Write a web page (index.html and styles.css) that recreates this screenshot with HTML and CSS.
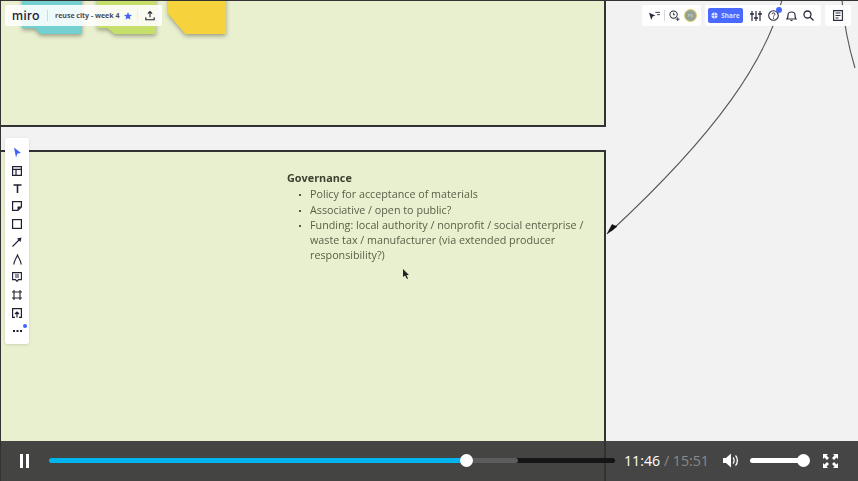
FILE: index.html
```html
<!DOCTYPE html>
<html>
<head lang="en">
    <meta charset="UTF-8">
    <title>reuse city - week 4</title>
    <link rel="stylesheet" href="styles.css">
</head>
<body>
    <div class="stage">
        <!-- board -->
        <div class="frame frame-top"></div>
        <div class="frame frame-main">
            <div class="note">
                <h3>Governance</h3>
                <ul>
                    <li>Policy for acceptance of materials</li>
                    <li>Associative / open to public?</li>
                    <li>Funding: local authority / nonprofit / social enterprise / waste tax / manufacturer (via extended producer responsibility?)</li>
                </ul>
            </div>
        </div>
        <div class="sticky sticky-teal"><div></div></div>
        <div class="sticky sticky-lime"><div></div></div>
        <div class="sticky sticky-yellow"><div></div></div>

        <svg class="arrows" width="858" height="481" viewBox="0 0 858 481">
            <path d="M782 0C765 60 720 130 611 231" fill="none" stroke="#555" stroke-width="1.100"/>
            <path d="M607 234L617 226.500L612 224.500Z" fill="#111" stroke="#111" stroke-width=".5"/>
            <path d="M842 0C844 25 849 48 855 68" fill="none" stroke="#555" stroke-width="1.100"/>
        </svg>

        <svg class="cursor" width="8" height="11" viewBox="0 0 8 11">
            <path d="M1 0L1 8L3 6.500L5 10L6 9.500L4.500 6L7 6Z" fill="#222"/>
        </svg>

        <!-- miro top left -->
        <div class="topbar topbar-left">
            <span class="logo">miro</span>
            <span class="sep"></span>
            <span class="board-name">reuse city - week 4</span>
            <svg class="star" width="8" height="8" viewBox="0 0 10 10"><path d="M5 0L6.400 3.300L10 3.700L7.200 6L8.100 9.500L5 7.700L1.900 9.500L2.800 6L0 3.700L3.600 3.300Z" fill="#4262ff"/></svg>
            <span class="sep sep-faint"></span>
            <svg width="10" height="11" viewBox="0 0 12 12"><path d="M6 8V1.500M3.500 3.800L6 1.300L8.500 3.800M1 8V11H11V8" fill="none" stroke="#1f2133" stroke-width="1.300"/></svg>
        </div>

        <!-- miro top right -->
        <div class="topbar-right">
            <div class="tb-group tb-collab">
                <svg width="12" height="10" viewBox="0 0 13 11"><path d="M1 2L8 5L5 6L3.500 10Z" fill="#1f2133"/><path d="M8 1.500H13M10 4H13" stroke="#1f2133"/></svg>
                <span class="sep"></span>
                <svg width="11" height="11" viewBox="0 0 12 12"><circle cx="5" cy="5" r="4" fill="none" stroke="#1f2133" stroke-width="1.100"/><path d="M5 3V5.500L6.500 5M9.500 8V12M7.500 10H11.500" fill="none" stroke="#1f2133"/></svg>
                <span class="avatar">FS</span>
            </div>
            <div class="tb-group tb-tools">
                <span class="share">
                    <svg width="7" height="7" viewBox="0 0 8 8"><circle cx="4" cy="4" r="3.500" fill="#dde3ff"/><path d="M0 4H8M4 0.500V7.500" stroke="#4262ff" stroke-width=".6"/></svg>
                    Share
                </span>
                <svg class="tool" width="12" height="12" viewBox="0 0 12 12"><path d="M2 1V11M6 1V11M10 1V11" stroke="#1f2133" stroke-width="1.200"/><path d="M0 4H4M4 8H8M8 4H12" stroke="#1f2133" stroke-width="1.500"/></svg>
                <span class="help">
                    <svg width="11" height="11" viewBox="0 0 11 11"><circle cx="5.500" cy="5.500" r="4.800" fill="none" stroke="#1f2133" stroke-width="1.100"/><path d="M4 4.200C4 2.500 7 2.500 7 4.200C7 5.200 5.500 5.300 5.500 6.500M5.500 7.500V8.800" fill="none" stroke="#1f2133"/></svg>
                    <span class="badge"></span>
                </span>
                <svg class="tool" width="11" height="12" viewBox="0 0 11 12"><path d="M1 9C2 8 2 7 2 5C2 1 9 1 9 5C9 7 9 8 10 9ZM4.500 10.500H6.500" fill="none" stroke="#1f2133" stroke-width="1.200"/></svg>
                <svg class="tool" width="11" height="11" viewBox="0 0 11 11"><circle cx="4.500" cy="4.500" r="3.500" fill="none" stroke="#1f2133" stroke-width="1.300"/><path d="M7 7L10.500 10.500" stroke="#1f2133" stroke-width="1.300"/></svg>
            </div>
            <div class="tb-group tb-notes">
                <svg width="10" height="11" viewBox="0 0 10 11"><path d="M.6.6H9.400V10.400H.6ZM2.500 3H7.500M2.500 5.500H7.500M2.500 8H5.500" fill="none" stroke="#1f2133" stroke-width="1.100"/></svg>
            </div>
        </div>

        <!-- left tools -->
        <div class="toolbar">
            <svg width="10" height="11" viewBox="0 0 10 11"><path d="M2 0.500L9 6L5.500 6.500L4 10.500Z" fill="#4262ff"/></svg>
            <svg width="10" height="10" viewBox="0 0 10 10"><path d="M.6.6H9.400V9.400H.6ZM.6 3.300H9.400M4 3.300V9.400" fill="none" stroke="#1f2133" stroke-width="1.200"/></svg>
            <svg width="9" height="9" viewBox="0 0 9 9"><path d="M.5 1H8.500M4.500 1V9" fill="none" stroke="#1f2133" stroke-width="1.600"/></svg>
            <svg width="10" height="10" viewBox="0 0 10 10"><path d="M.6.6H9.400V6L6 9.400H.6Z" fill="none" stroke="#1f2133" stroke-width="1.200"/><path d="M5.500 9.500V5.500H9.500Z" fill="#1f2133"/></svg>
            <svg width="10" height="10" viewBox="0 0 10 10"><rect x=".6" y=".6" width="8.800" height="8.800" fill="none" stroke="#1f2133" stroke-width="1.200"/></svg>
            <svg width="10" height="10" viewBox="0 0 10 10"><path d="M.5 9.500L7 3" stroke="#1f2133" stroke-width="1.100"/><path d="M9.500 .5L8.500 5L5 1.500Z" fill="#1f2133"/></svg>
            <svg width="9" height="11" viewBox="0 0 9 11"><path d="M.8 10.500C1 7 3 5 4.500 1C6 5 8 7 8.200 10.500" fill="none" stroke="#1f2133" stroke-width="1.100"/></svg>
            <svg width="10" height="10" viewBox="0 0 10 10"><path d="M.6.6H9.400V7.600H6.500L5 9.400L3.500 7.600H.6ZM3 3H7M3 5H7" fill="none" stroke="#1f2133" stroke-width="1.100"/></svg>
            <svg width="10" height="10" viewBox="0 0 10 10"><path d="M2 0V10M8 0V10M0 2H10M0 8H10" fill="none" stroke="#1f2133" stroke-width="1.100"/></svg>
            <svg width="10" height="10" viewBox="0 0 10 10"><path d="M3 9.400H.6V.6H9.400V9.400H7M5 9.500V4M3 6L5 4L7 6" fill="none" stroke="#1f2133" stroke-width="1.200"/></svg>
            <span class="more">
                <svg width="9" height="2" viewBox="0 0 9 2"><path d="M0 0H2V2H0ZM3.500 0H5.500V2H3.500ZM7 0H9V2H7Z" fill="#1f2133"/></svg>
                <span class="more-dot"></span>
            </span>
        </div>

        <!-- video player -->
        <div class="player">
            <button class="pause"><span></span><span></span></button>
            <div class="progress">
                <div class="buffered"></div>
                <div class="played"></div>
                <div class="knob knob-play"></div>
            </div>
            <div class="time">11:46 <span class="slash">/</span> <span class="total">15:51</span></div>
            <svg class="speaker" width="17" height="15" viewBox="0 0 17 15"><path d="M0 5H3L8 .5V14.500L3 10H0Z" fill="#fff"/><path d="M10 4.500C11.500 6 11.500 9 10 10.500M12.500 2.500C15 5 15 10 12.500 12.500" fill="none" stroke="#fff" stroke-width="1.300"/></svg>
            <div class="volume"><div class="knob knob-vol"></div></div>
            <svg class="fullscreen" width="15" height="14" viewBox="0 0 15 14"><path d="M0 0H5L3.500 1.500L6 4L4 6L1.500 3.500L0 5ZM15 0V5L13.500 3.500L11 6L9 4L11.500 1.500L10 0ZM0 14V9L1.500 10.500L4 8L6 10L3.500 12.500L5 14ZM15 14H10L11.500 12.500L9 10L11 8L13.500 10.500L15 9Z" fill="#fff"/></svg>
        </div>
    </div>
</body>
</html>
```

FILE: styles.css
```css
* {
    margin: 0;
    padding: 0;
    box-sizing: border-box;
}
html, body {
    width: 858px;
    height: 481px;
    overflow: hidden;
}
ul {
    list-style: none;
}
.stage {
    position: relative;
    width: 858px;
    height: 481px;
    overflow: hidden;
    background-color: #f2f2f2;
    border-top: 1px solid #333;
    font-family: "Open Sans", "Liberation Sans", sans-serif;
}
/* dark edge of the video */
.stage::after {
    content: "";
    position: absolute;
    top: 0;
    left: 0;
    width: 1px;
    height: 100%;
    background-color: #333;
}

/* board frames */
.frame {
    position: absolute;
    left: 1px;
    width: 605px;
    background-color: #e9f0cf;
    border: 2px solid #333;
    border-left: 0;
}
.frame-top {
    top: -4px;
    height: 130px;
}
.frame-main {
    top: 149px;
    height: 340px;
    padding: 18px 0 0 286px;
}
.note {
    width: 300px;
    color: #5a6049;
    font-size: 10.750px;
    line-height: 15.300px;
    filter: blur(.3px);
}
.note h3 {
    font-size: 10.850px;
    font-weight: 700;
    line-height: 15.300px;
    margin-bottom: 2px;
    color: #3c4230;
}
.note ul {
    padding-left: 23px;
}
.note li {
    position: relative;
}
.note li::before {
    content: "";
    position: absolute;
    left: -11px;
    top: 7px;
    width: 2px;
    height: 2px;
    background-color: #555;
}

/* stickies */
.sticky {
    position: absolute;
    top: -6px;
    filter: drop-shadow(0 2px 2px rgba(60, 60, 40, .45));
}
.sticky div {
    height: 39px;
}
.sticky-teal {
    left: 22px;
}
.sticky-teal div {
    width: 60px;
    background-color: #74cfd0;
    clip-path: polygon(0 0, 100% 0, 100% 100%, 30% 100%, 22% 85%, 0 85%);
}
.sticky-lime {
    left: 97px;
}
.sticky-lime div {
    width: 59px;
    background-color: #c6de6a;
    clip-path: polygon(0 0, 100% 0, 100% 100%, 30% 100%, 18% 85%, 0 85%);
}
.sticky-yellow {
    left: 168px;
}
.sticky-yellow div {
    width: 58px;
    background-color: #f6d23c;
    clip-path: polygon(0 0, 100% 0, 100% 100%, 30% 100%, 0 48%);
}

.arrows {
    position: absolute;
    top: -1px;
    left: 0;
}
.cursor {
    position: absolute;
    top: 268px;
    left: 402px;
}

/* top bars */
.topbar {
    position: absolute;
    top: 4px;
    left: 5px;
    height: 21px;
    width: 157px;
    display: flex;
    align-items: center;
    padding-left: 7px;
    background-color: rgba(255, 255, 255, .88);
    border-radius: 2px;
}
.logo {
    font-family: "Inter", sans-serif;
    font-size: 12.500px;
    font-weight: 500;
    color: #1f2133;
    letter-spacing: .4px;
}
.sep {
    width: 1px;
    height: 11px;
    background-color: #d5d6da;
    margin: 0 7px;
}
.sep-faint {
    background-color: #eee;
    margin: 0 7px 0 5px;
}
.board-name {
    font-size: 7px;
    font-weight: 700;
    color: #4a4c5c;
    white-space: nowrap;
    margin-right: 5px;
}
.topbar-right {
    position: absolute;
    top: 4px;
    right: 7px;
    display: flex;
    gap: 4px;
    opacity: .95;
}
.tb-group {
    height: 21px;
    display: flex;
    align-items: center;
    background-color: #fff;
    border-radius: 2px;
}
.tb-collab {
    width: 59px;
    padding-left: 6px;
}
.tb-collab .sep {
    margin: 0 4px;
}
.avatar {
    width: 13px;
    height: 13px;
    margin-left: 4px;
    border-radius: 50%;
    border: 1px solid #e7cf4c;
    background-color: #8f9f96;
    color: #dfe5e0;
    font-size: 4px;
    line-height: 11px;
    text-align: center;
}
.tb-tools {
    width: 116px;
    padding-left: 3px;
    gap: 6.500px;
}
.share {
    width: 35px;
    height: 15px;
    display: flex;
    align-items: center;
    justify-content: center;
    gap: 3px;
    background-color: #4262ff;
    border-radius: 2px;
    color: #dde3ff;
    font-size: 6.500px;
    font-weight: 700;
}
.help {
    position: relative;
    display: flex;
}
.badge {
    position: absolute;
    top: -3px;
    right: -3px;
    width: 6px;
    height: 6px;
    border-radius: 50%;
    background-color: #4262ff;
}
.tb-notes {
    width: 26px;
    padding-left: 8px;
}

/* left toolbar */
.toolbar {
    position: absolute;
    top: 137px;
    left: 5px;
    width: 24px;
    height: 206px;
    display: grid;
    grid-auto-rows: 17.800px;
    justify-items: center;
    align-items: center;
    padding-top: 6px;
    background-color: #fff;
    border-radius: 2px;
    box-shadow: 0 1px 3px rgba(0, 0, 0, .12);
}
.more {
    position: relative;
    display: flex;
}
.more-dot {
    position: absolute;
    top: -6px;
    right: -5px;
    width: 4px;
    height: 4px;
    border-radius: 50%;
    background-color: #4262ff;
}

/* video player */
.player {
    position: absolute;
    left: 0;
    bottom: 0;
    width: 858px;
    height: 40px;
    padding: 0 0 1px 1px;
    display: flex;
    align-items: center;
    background-color: rgba(50, 50, 50, .9);
}
.pause {
    width: 48px;
    height: 39px;
    display: flex;
    justify-content: center;
    gap: 3px;
    align-items: center;
    padding-right: 1px;
    background: none;
    border: 0;
}
.pause span {
    width: 3px;
    height: 14px;
    background-color: #fff;
}
.progress {
    position: relative;
    width: 566px;
    height: 5px;
    border-radius: 3px;
    background-color: #151515;
}
.buffered {
    position: absolute;
    left: 0;
    top: 0;
    width: 469px;
    height: 5px;
    border-radius: 3px;
    background-color: #5c5c5c;
}
.played {
    position: absolute;
    left: 0;
    top: 0;
    width: 417px;
    height: 5px;
    border-radius: 3px;
    background-color: #00b4f0;
}
.knob {
    position: absolute;
    top: -4px;
    width: 13px;
    height: 13px;
    border-radius: 50%;
    background-color: #fff;
}
.knob-play {
    left: 411px;
}
.time {
    margin-left: 9px;
    width: 92px;
    color: #fff;
    font-size: 14.200px;
    white-space: nowrap;
}
.slash {
    color: #8a8a8a;
}
.total {
    color: #8a8a8a;
}
.speaker {
    margin-left: 7px;
}
.volume {
    position: relative;
    width: 58px;
    height: 5px;
    margin-left: 10px;
    border-radius: 3px;
    background-color: #fff;
}
.knob-vol {
    left: 47px;
}
.fullscreen {
    margin-left: 15px;
}
```
